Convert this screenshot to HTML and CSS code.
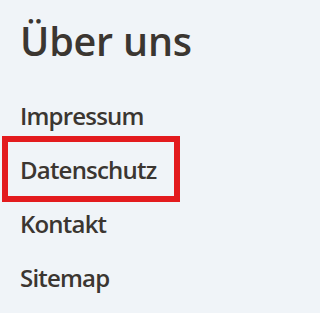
FILE: index.html
```html
<!DOCTYPE html>
<html lang="de">
<head>
<meta charset="utf-8">
<link rel="stylesheet" href="styles.css">
</head>
<body>
<nav class="footer-nav">
  <h2 class="title">Über uns</h2>
  <ul class="links">
    <li class="item"><a class="link" href="#">Impressum</a></li>
    <li class="item item--focus"><a class="link" href="#">Datenschutz</a></li>
    <li class="item"><a class="link" href="#">Kontakt</a></li>
    <li class="item"><a class="link" href="#">Sitemap</a></li>
  </ul>
</nav>
</body>
</html>
```
FILE: styles.css
```css
html, body {
  margin: 0;
  padding: 0;
  background: #f0f4f8;
}
body {
  font-family: "Open Sans", "Noto Sans", sans-serif;
  color: #3b3631;
}
.footer-nav {
  padding: 15px 0 0 8px;
}
.title {
  margin: 0 0 0 12px;
  font-size: 39.5px;
  font-weight: 600;
  line-height: 52px;
  letter-spacing: -0.2px;
}
.links {
  list-style: none;
  margin: 21px 0 0 0;
  padding: 0;
  display: flex;
  flex-direction: column;
}
.item {
  height: 54px;
  display: flex;
  align-items: center;
}
.item--focus {
  width: 166px;
  outline: 6px solid #e31b1e;
}
.link {
  padding-left: 12px;
  font-size: 24px;
  font-weight: 600;
  letter-spacing: -0.8px;
  color: #3b3631;
  text-decoration: none;
}
```
